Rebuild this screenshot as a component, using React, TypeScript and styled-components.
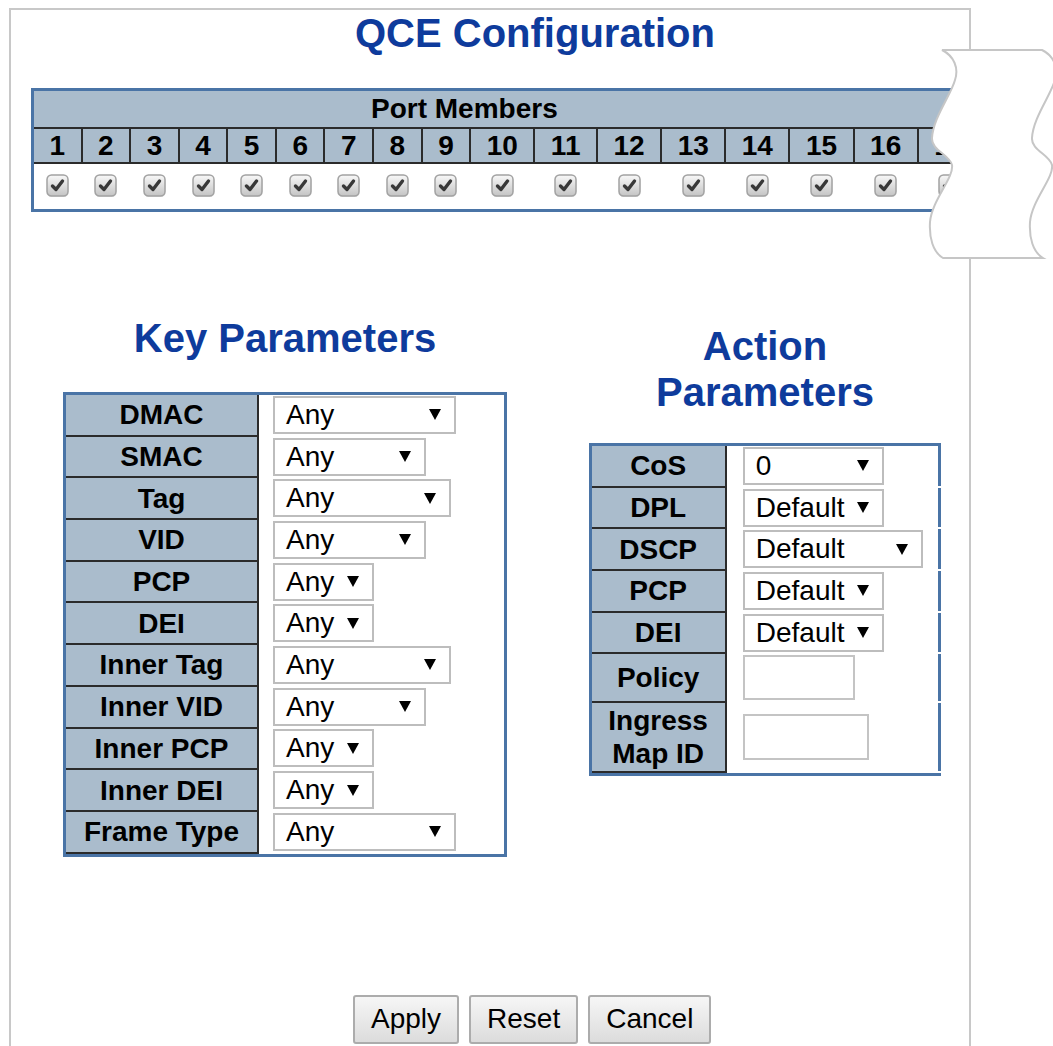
import React from "react";
import styled, { createGlobalStyle, css } from "styled-components";

const Global = createGlobalStyle`
html, body {
  margin: 0;
  padding: 0;
  overflow: hidden;
  background: #fff;
}
body {
  font-family: "Liberation Sans", Arial, sans-serif;
  color: #000;
}
`

const Stage = styled.div`
position: relative;
width: 1053px;
height: 1046px;
overflow: hidden;
`
const Frame = styled.div`
margin: 8px 0 0 9px;
width: 958px;
height: 1100px;
border: 2px solid #c8c8c8;
border-bottom: none;
`
const Title = styled.h1`
margin: 0;
padding-left: 344px;
font-size: 40px;
line-height: 46px;
font-weight: bold;
color: #0e3b9c;
white-space: nowrap;
`

const PortTable = styled.div<{ $cols: number }>`
display: grid;
width: max-content;
grid-template-columns: repeat(${p => p.$cols}, auto);
margin: 32px 0 0 20px;
border: 3px solid #4a74a6;
background: #fff;
`
const PortHeader = styled.div`
grid-column: 1 / -1;
height: 35.5px;
line-height: 35.5px;
padding-left: 337px;
background: #aabccc;
border-bottom: 2px solid #2b2b2b;
font-size: 28px;
font-weight: bold;
white-space: nowrap;
`
const PortNumber = styled.div`
height: 33px;
line-height: 33px;
padding: 0 15.5px;
text-align: center;
background: #aabccc;
border-right: 2px solid #2b2b2b;
border-bottom: 2px solid #2b2b2b;
font-size: 28px;
font-weight: bold;
`
const PortCheck = styled.div`
height: 45px;
display: flex;
align-items: center;
justify-content: center;
`

const Params = styled.div`
display: grid;
grid-template-columns: 548px 412px;
align-items: start;
margin-top: 103.5px;
`
const Column = styled.section<{ $top: number }>`
display: flex;
flex-direction: column;
align-items: center;
padding-top: ${p => p.$top}px;
`
const SectionTitle = styled.h2`
margin: 0;
font-size: 40px;
line-height: 46px;
font-weight: bold;
color: #0e3b9c;
text-align: center;
white-space: nowrap;
`
const ParamTable = styled.div<{ $gap: number; $label: number; $data: number }>`
margin-top: ${p => p.$gap}px;
display: grid;
grid-template-columns: ${p => p.$label}px ${p => p.$data}px;
border: 3px solid #4a74a6;
border-right: none;
background: #fff;
`
const Label = styled.div<{ $h: number }>`
box-sizing: border-box;
height: ${p => p.$h}px;
display: flex;
align-items: center;
justify-content: center;
text-align: center;
padding: 0 4px;
background: #aabccc;
border-right: 2px solid #2b2b2b;
border-bottom: 2px solid #2b2b2b;
font-size: 28px;
line-height: 33px;
font-weight: bold;
`
const Value = styled.div<{ $h: number; $inset: number; $split?: boolean }>`
box-sizing: border-box;
display: flex;
align-items: center;
padding-left: ${p => p.$inset}px;
border-right: 3px solid #4a74a6;
${p => p.$split
  ? css`height: ${p.$h - 2}px; margin-bottom: 2px;`
  : css`height: ${p.$h}px; padding-bottom: 2px;`}
`
const Select = styled.div<{ $w: number }>`
box-sizing: border-box;
width: ${p => p.$w}px;
height: 38px;
display: flex;
align-items: center;
justify-content: space-between;
padding: 0 13px 0 11px;
border: 2px solid #bdbdbd;
background: #fff;
font-size: 28px;
line-height: 32px;
`
const Arrow = styled.span`
width: 0;
height: 0;
border-left: 6px solid transparent;
border-right: 6px solid transparent;
border-top: 11px solid #000;
`
const TextBox = styled.input<{ $w: number; $h: number }>`
box-sizing: border-box;
width: ${p => p.$w}px;
height: ${p => p.$h}px;
padding: 0 6px;
border: 2px solid #c4c4c4;
background: #fff;
font-family: inherit;
font-size: 28px;
outline: none;
`

const ButtonBar = styled.div`
display: flex;
gap: 10px;
padding-left: 342px;
margin-top: 138.3px;
`
const Button = styled.button`
height: 49px;
padding: 0 16px;
font-family: inherit;
font-size: 28px;
color: #000;
border: 2px solid #acacac;
border-radius: 3px;
background: linear-gradient(#f6f6f6, #dcdcdc);
`
const Tear = styled.svg`
position: absolute;
left: 920px;
top: 40px;
`

const Check = () => (
  <svg width="25" height="25" viewBox="0 0 25 25">
    <defs>
      <linearGradient id="cbg" x1="0" y1="0" x2="0" y2="1">
        <stop offset="0" stopColor="#f8f8f8" />
        <stop offset="1" stopColor="#c4c4c4" />
      </linearGradient>
    </defs>
    <rect x="1.5" y="2" width="21" height="21" rx="4.5" fill="#d8d8d8" opacity="0.6" />
    <rect x="1" y="1" width="21" height="21" rx="4.5" fill="url(#cbg)" stroke="#a2a2a2" strokeWidth="1.5" />
    <path d="M6.5 12 L10 15.5 L16.5 7" fill="none" stroke="#383838" strokeWidth="3.4" strokeLinecap="round" strokeLinejoin="round" />
  </svg>
)

const ports = Array.from({ length: 17 }, (_, i) => i + 1)

const keyRows: [string, number][] = [
  ["DMAC", 183], ["SMAC", 153], ["Tag", 178], ["VID", 153], ["PCP", 101], ["DEI", 101],
  ["Inner Tag", 178], ["Inner VID", 153], ["Inner PCP", 101], ["Inner DEI", 101], ["Frame Type", 183],
]

const actionRows: { label: string; value?: string; w: number; h: number; box?: [number, number] }[] = [
  { label: "CoS", value: "0", w: 141, h: 41.7 },
  { label: "DPL", value: "Default", w: 141, h: 41.7 },
  { label: "DSCP", value: "Default", w: 180, h: 41.7 },
  { label: "PCP", value: "Default", w: 141, h: 41.7 },
  { label: "DEI", value: "Default", w: 141, h: 41.7 },
  { label: "Policy", w: 112, h: 49, box: [112, 45] },
  { label: "Ingress Map ID", w: 126, h: 70, box: [126, 46] },
]

const App: React.FC = () => {
  return (
    <Stage>
      <Global />
      <Frame>
        <Title>QCE Configuration</Title>
        <PortTable $cols={ports.length}>
          <PortHeader>Port Members</PortHeader>
          {ports.map(p => <PortNumber key={"n" + p}>{p}</PortNumber>)}
          {ports.map(p => <PortCheck key={"c" + p}><Check /></PortCheck>)}
        </PortTable>

        <Params>
          <Column $top={0}>
            <SectionTitle>Key Parameters</SectionTitle>
            <ParamTable $gap={31} $label={193} $data={248}>
              {keyRows.map(([label, w]) => (
                <React.Fragment key={label}>
                  <Label $h={41.7}>{label}</Label>
                  <Value $h={41.7} $inset={14}>
                    <Select $w={w}>Any<Arrow /></Select>
                  </Value>
                </React.Fragment>
              ))}
            </ParamTable>
          </Column>

          <Column $top={8}>
            <SectionTitle>Action<br />Parameters</SectionTitle>
            <ParamTable $gap={28} $label={135.3} $data={214.7}>
              {actionRows.map(r => (
                <React.Fragment key={r.label}>
                  <Label $h={r.h}>{r.label}</Label>
                  <Value $h={r.h} $inset={16} $split>
                    {r.box
                      ? <TextBox $w={r.box[0]} $h={r.box[1]} />
                      : <Select $w={r.w}>{r.value}<Arrow /></Select>}
                  </Value>
                </React.Fragment>
              ))}
            </ParamTable>
          </Column>
        </Params>

        <ButtonBar>
          <Button>Apply</Button>
          <Button>Reset</Button>
          <Button>Cancel</Button>
        </ButtonBar>
      </Frame>

      <Tear width="133" height="230" viewBox="920 40 133 230">
        <path
          d="M 942 50 L 1042 50 C 1054 56, 1059 68, 1055 80 C 1051 95, 1033 118, 1032 138 C 1031 150, 1050 155, 1052 165 C 1054 178, 1032 200, 1030 222 C 1029 238, 1033 252, 1043 258 L 943 258 C 933 252, 929 238, 930 222 C 932 200, 954 178, 952 165 C 950 155, 931 150, 932 138 C 933 118, 951 95, 955 80 C 959 68, 954 56, 942 50 Z"
          fill="#fff"
          stroke="#c6c6c6"
          strokeWidth="2"
        />
      </Tear>
    </Stage>
  )
}

export default App
